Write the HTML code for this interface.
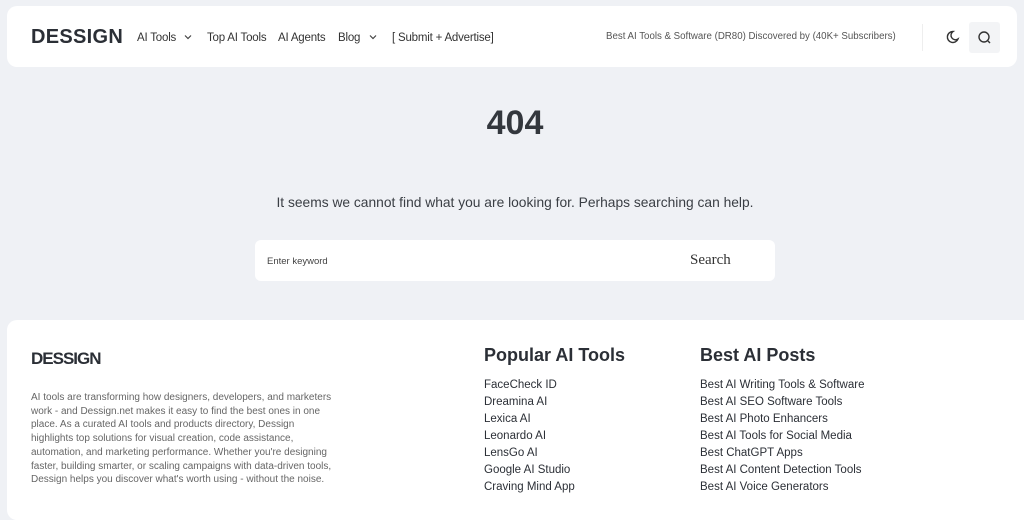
<!DOCTYPE html>
<html><head><meta charset="utf-8"><style>
*{margin:0;padding:0;box-sizing:border-box}
body{width:1024px;height:496px;overflow:hidden;background:#eff1f5;font-family:"Liberation Sans",sans-serif;color:#2b2f36;position:relative}
.a{position:absolute;white-space:nowrap}
.hdr{position:absolute;left:7px;top:6px;width:1010px;height:61px;background:#fff;border-radius:10px}
.nav{font-size:11.5px;color:#333;top:32px;letter-spacing:-0.2px}
.ft{position:absolute;left:7px;top:320px;width:1030px;height:200px;background:#fff;border-radius:10px}
.list{font-size:11.5px;line-height:17px;color:#2b2f36}
h2{font-size:18px;font-weight:bold;color:#2b2f36}
</style></head><body>
<div class="hdr"></div>
<div class="a" style="left:31px;top:26px;font-size:20px;font-weight:bold;color:#2b2f36;letter-spacing:0.3px">DESSIGN</div>
<div class="a nav" style="left:137px">AI Tools</div>
<svg class="a" style="left:184px;top:34px" width="8" height="6" viewBox="0 0 8 6"><path d="M1 1.5l3 3 3-3" fill="none" stroke="#444" stroke-width="1.2"/></svg>
<div class="a nav" style="left:207px">Top AI Tools</div>
<div class="a nav" style="left:278px">AI Agents</div>
<div class="a nav" style="left:338px">Blog</div>
<svg class="a" style="left:369px;top:34px" width="8" height="6" viewBox="0 0 8 6"><path d="M1 1.5l3 3 3-3" fill="none" stroke="#444" stroke-width="1.2"/></svg>
<div class="a nav" style="left:392px">[ Submit + Advertise]</div>
<div class="a" style="left:606px;top:31px;font-size:9.7px;color:#555">Best AI Tools &amp; Software (DR80) Discovered by (40K+ Subscribers)</div>
<div class="a" style="left:922px;top:24px;width:1px;height:27px;background:#eee"></div>
<svg class="a" style="left:944px;top:29px" width="16" height="16" viewBox="0 0 16 16"><path d="M9 2.5A5.5 5.5 0 1 0 14 10 4.5 4.5 0 0 1 9 2.5z" fill="none" stroke="#333" stroke-width="1.4"/></svg>
<div class="a" style="left:969px;top:22px;width:31px;height:31px;background:#f3f4f6;border-radius:3px"></div>
<svg class="a" style="left:977px;top:30px" width="16" height="16" viewBox="0 0 16 16"><circle cx="7" cy="7" r="5" fill="none" stroke="#333" stroke-width="1.4"/><path d="M11 11l2 2" stroke="#333" stroke-width="1.4"/></svg>

<div class="a" style="left:0;width:1030px;text-align:center;top:104px;font-size:34px;font-weight:bold;color:#33373d">404</div>
<div class="a" style="left:0;width:1030px;text-align:center;top:195px;font-size:13.8px;color:#3a3e44">It seems we cannot find what you are looking for. Perhaps searching can help.</div>
<div class="a" style="left:255px;top:240px;width:520px;height:41px;background:#fff;border-radius:6px"></div>
<div class="a" style="left:267px;top:256px;font-size:9.5px;color:#444">Enter keyword</div>
<div class="a" style="left:690px;top:252px;font-size:15px;color:#333;font-family:'Liberation Serif',serif">Search</div>

<div class="ft"></div>
<div class="a" style="left:31px;top:349px;font-size:17px;font-weight:bold;color:#2b2f36;letter-spacing:-1px">DESSIGN</div>
<div class="a" style="left:31px;top:391px;font-size:10px;line-height:13.7px;color:#666;white-space:normal;width:305px">AI tools are transforming how designers, developers, and marketers work - and Dessign.net makes it easy to find the best ones in one place. As a curated AI tools and products directory, Dessign highlights top solutions for visual creation, code assistance, automation, and marketing performance. Whether you're designing faster, building smarter, or scaling campaigns with data-driven tools, Dessign helps you discover what's worth using - without the noise.</div>
<h2 class="a" style="left:484px;top:345px">Popular AI Tools</h2>
<div class="a list" style="left:484px;top:377px">FaceCheck ID<br>Dreamina AI<br>Lexica AI<br>Leonardo AI<br>LensGo AI<br>Google AI Studio<br>Craving Mind App</div>
<h2 class="a" style="left:700px;top:345px">Best AI Posts</h2>
<div class="a list" style="left:700px;top:377px">Best AI Writing Tools &amp; Software<br>Best AI SEO Software Tools<br>Best AI Photo Enhancers<br>Best AI Tools for Social Media<br>Best ChatGPT Apps<br>Best AI Content Detection Tools<br>Best AI Voice Generators</div>
</body></html>
